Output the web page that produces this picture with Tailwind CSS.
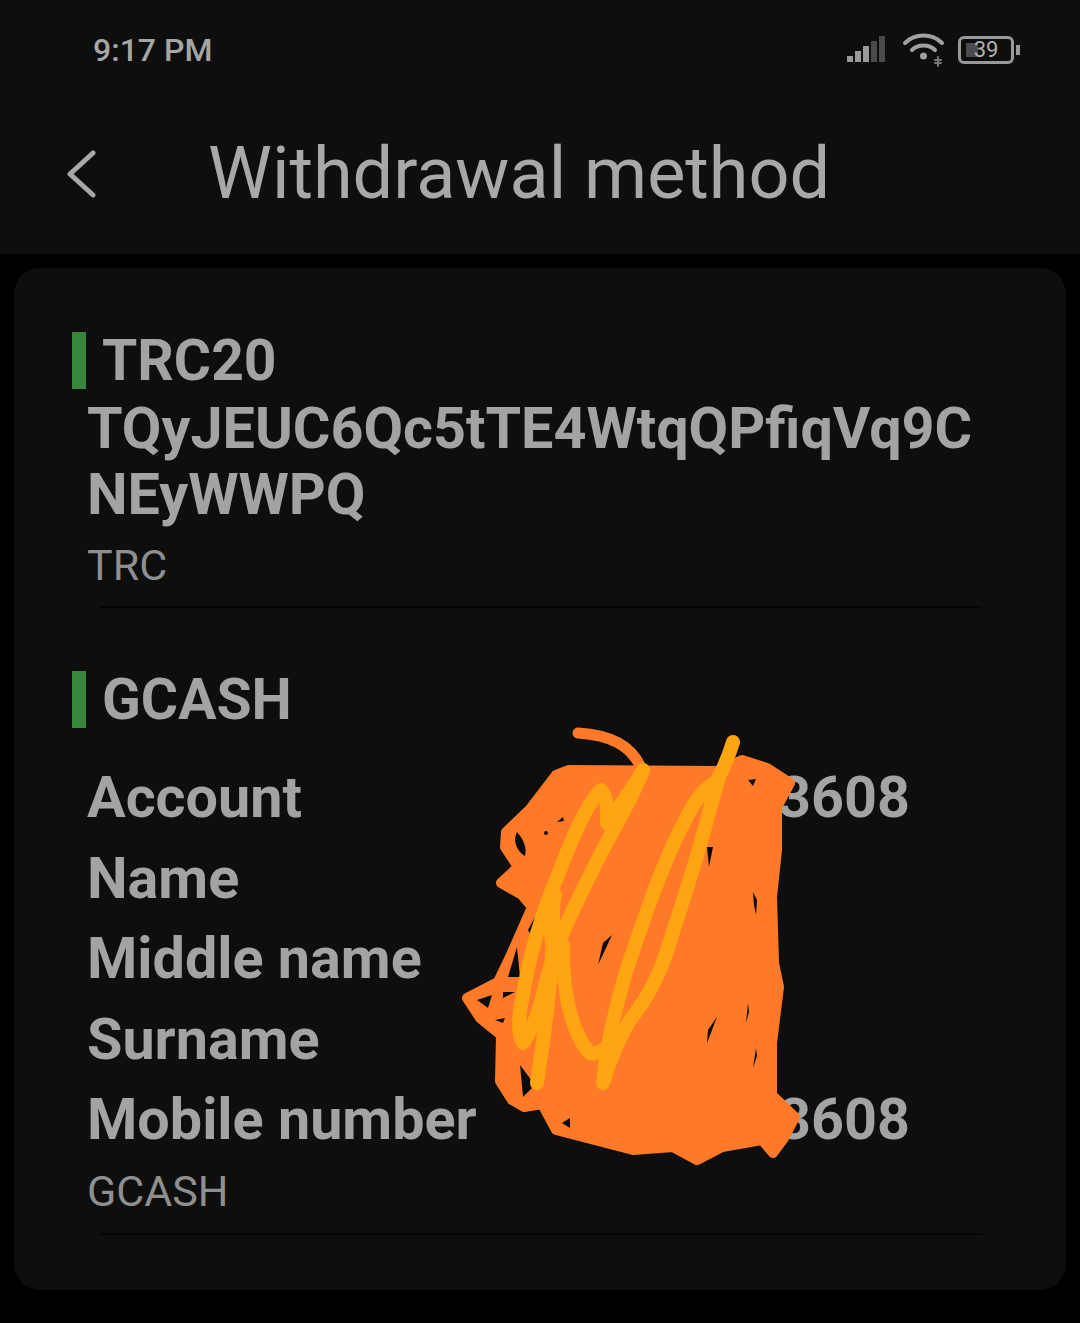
<!DOCTYPE html>
<html lang="en">
<head>
    <meta charset="UTF-8">
    <meta name="viewport" content="width=device-width, initial-scale=1.0">
    <title>Withdrawal method</title>
    <script src="https://cdn.jsdelivr.net/npm/@tailwindcss/browser@4"></script>
</head>
<body class="bg-black font-['Roboto',sans-serif]">
<div class="relative w-[1080px] h-[1323px] overflow-hidden bg-black">

    <!-- Header -->
    <header class="h-[254px] bg-[#0e0e0e]">
        <div class="flex items-center justify-between h-[100px] pl-[93px] pr-[60px]">
            <span class="text-[32px] font-medium text-[#a6a6a6]">9:17 PM</span>
            <div class="flex items-center gap-[14px]">
                <svg class="w-[42px] h-[30px]" viewBox="0 0 42 30">
                    <rect x="1" y="21" width="6" height="6" fill="#999"/>
                    <rect x="9" y="16" width="6" height="11" fill="#999"/>
                    <rect x="17" y="11" width="6" height="16" fill="#999"/>
                    <rect x="25" y="6" width="6" height="21" fill="#4a4a4a"/>
                    <rect x="33" y="1" width="6" height="26" fill="#4a4a4a"/>
                </svg>
                <svg class="w-[44px] h-[36px]" viewBox="0 0 44 36" fill="none" stroke="#a0a0a0" stroke-width="4" stroke-linecap="round">
                    <path d="M3 11C13 1 30 1 40 11"/>
                    <path d="M10 18C16 12 27 12 33 18"/>
                    <circle cx="21.500" cy="24" r="3.500" fill="#a0a0a0" stroke="none"/>
                    <path d="M36 25v9M33 28h6M33 31h6" stroke-width="2" stroke="#777"/>
                </svg>
                <div class="flex items-center gap-[2px] -ml-[2px]">
                    <div class="relative flex items-center justify-center w-[56px] h-[28px] rounded-[6px] border-[3px] border-[#999]">
                        <div class="absolute left-[5px] inset-y-[4px] w-[12px] bg-[#4a4a4a]"></div>
                        <span class="relative text-[22px] leading-none text-[#b0b0b0]">39</span>
                    </div>
                    <div class="w-[4px] h-[10px] bg-[#999]"></div>
                </div>
            </div>
        </div>
        <div class="flex items-center h-[84px] mt-[32px]">
            <svg class="w-[30px] h-[48px] ml-[66px]" viewBox="0 0 30 48" fill="none" stroke="#a8a8a8" stroke-width="5" stroke-linecap="round" stroke-linejoin="round">
                <path d="M27 3L4 24L27 45"/>
            </svg>
            <h1 class="ml-[112px] text-[72px] leading-none text-[#a8a8a8]">Withdrawal method</h1>
        </div>
    </header>

    <!-- Card -->
    <main class="mt-[14px] mx-[14px] h-[1022px] rounded-[26px] bg-[#0e0e0e] pl-[58px] pr-[84px] pt-[64px]">
        <section>
            <div class="flex items-center h-[57px]">
                <span class="w-[14px] h-[57px] bg-[#38853c]"></span>
                <h2 class="ml-[16px] text-[57px] leading-none font-bold text-[#a3a3a3]">TRC20</h2>
            </div>
            <p class="pl-[15px] mt-[7px] text-[57.500px] leading-[66px] font-bold text-[#a3a3a3] whitespace-nowrap">TQyJEUC6Qc5tTE4WtqQPfiqVq9C<br>NEyWWPQ</p>
            <p class="pl-[15px] mt-[12px] text-[43px] leading-[50px] text-[#8f8f8f]">TRC</p>
            <div class="ml-[28px] mt-[16px] h-[2px] bg-[#050505]"></div>
        </section>

        <section class="mt-[63px]">
            <div class="flex items-center h-[57px]">
                <span class="w-[14px] h-[57px] bg-[#38853c]"></span>
                <h2 class="ml-[16px] text-[57px] leading-none font-bold text-[#a3a3a3]">GCASH</h2>
            </div>
            <div class="mt-[30px] pl-[15px] pr-[72px] text-[57.500px] leading-[80.500px] font-bold text-[#a3a3a3]">
                <div class="flex justify-between"><span>Account</span><span>3608</span></div>
                <div>Name</div>
                <div>Middle name</div>
                <div>Surname</div>
                <div class="flex justify-between"><span>Mobile number</span><span>3608</span></div>
            </div>
            <p class="pl-[15px] mt-[5px] text-[43px] leading-[50px] text-[#8f8f8f]">GCASH</p>
            <div class="ml-[28px] mt-[17px] h-[2px] bg-[#050505]"></div>
        </section>
    </main>

    <!-- Scribble over the account details -->
    <svg class="absolute left-[440px] top-[710px] w-[500px] h-[470px]" viewBox="440 710 500 470" fill="none" stroke-linecap="round" stroke-linejoin="round">
        <path fill="#ff7a28" stroke="#ff7a28" stroke-width="10" d="M556 775L530 809L506 832L505 847L518 867L501 883L522 895L532 907L510 957L498 982L467 998L480 1018L501 1035L500 1081L512 1100L524 1107L542 1104L556 1130L633 1150L673 1147L697 1160L722 1147L762 1140L773 1153L784 1138L795 1117L772 1095L772 1043L779 987L774 963L772 897L777 850L777 807L790 783L767 768L742 760L717 771L569 770Z"/>
        <path stroke="#ff7a28" stroke-width="11" d="M578 733C610 735 632 745 642 770"/>
        <g fill="#0b0b0b">
            <path d="M517 832C524 840 527 848 525 856C518 852 512 842 517 832Z"/>
            <path d="M508 977L520 977L517 947Z"/>
            <path d="M532 937L535 917L528 930Z"/>
            <path d="M477 1000L492 995L488 1008Z"/>
            <path d="M503 992L515 992L503 998Z"/>
            <path d="M495 1020L505 1018L503 1023Z"/>
            <path d="M520 1065L535 1085L523 1097Z"/>
            <path d="M562 1123L570 1118L570 1128Z"/>
            <path d="M612 935L598 965L603 943Z"/>
            <path d="M707 847L713 847L709 867Z"/>
            <path d="M753 892L757 900L756 915L754 905Z"/>
            <path d="M717 1017L707 1043L708 1030Z"/>
            <path d="M748 1003L749 1012L746 1023Z"/>
            <path d="M756 1048L757 1056L753 1068Z"/>
            <path d="M748 780L756 779L753 786Z"/>
            <path d="M557 822L563 817L564 821Z"/>
            <circle cx="546" cy="833" r="2"/>
        </g>
        <g stroke="#ffa412" stroke-width="14">
            <path d="M733 742C726 765 720 775 716 782C700 790 690 810 680 830C660 870 640 930 625 975C615 1010 606 1050 603 1083C610 1060 618 1040 630 1020C650 995 662 970 672 935C685 895 698 855 707 820C712 800 716 790 718 780"/>
            <path d="M643 770C632 790 620 805 607 823C608 805 606 795 601 790C590 800 575 830 560 870C545 905 530 950 522 1000C518 1020 518 1035 523 1043C532 1030 540 1010 545 985C555 945 575 905 595 865C615 825 632 800 643 770"/>
            <path d="M553 907C555 960 545 1030 537 1083"/>
            <path d="M563 945C562 990 572 1035 590 1053C596 1055 600 1052 603 1050"/>
            <path d="M555 895C548 925 550 950 560 965"/>
        </g>
    </svg>
</div>
</body>
</html>
